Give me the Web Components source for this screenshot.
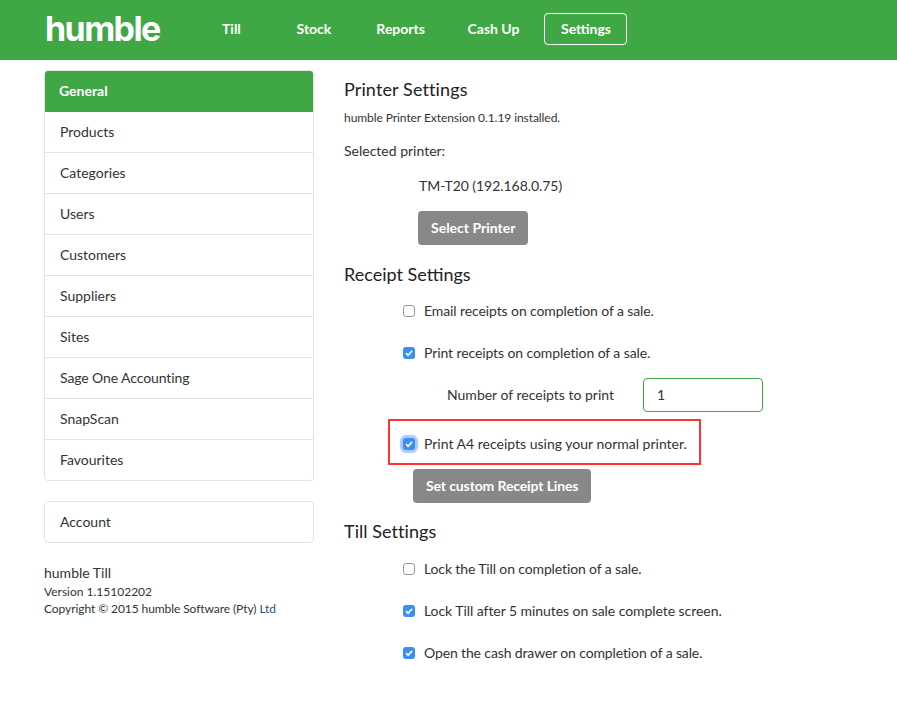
<!DOCTYPE html>
<html>
<head>
<meta charset="utf-8">
<title>humble Till</title>
<style>
  html, body { margin: 0; padding: 0; background: #fff; }
  body { font-family: Lato, "Liberation Sans", sans-serif; font-size: 14px; color: #333; }
</style>
</head>
<body>
<humble-app></humble-app>
<script>
class HumbleHeader extends HTMLElement {
  connectedCallback() {
    this.attachShadow({ mode: 'open' });
    this.shadowRoot.innerHTML = `
      <style>
        :host { display: flex; align-items: center; box-sizing: border-box; height: 60px; background: #3fa845; padding: 0 0 2px 45px; color: #fff; }
        .logo { font-family: Inter, Roboto, sans-serif; font-size: 34px; font-weight: 700; letter-spacing: -1.6px; width: 161px; line-height: 58px; flex: none; }
        nav { display: flex; align-items: center; }
        a { display: block; box-sizing: border-box; height: 32px; line-height: 30px; padding: 0 15px; border: 1px solid transparent; border-radius: 4px; font-size: 14px; font-weight: 700; color: #fff; }
        a:nth-child(1) { margin-right: 23.7px; }
        a:nth-child(2) { margin-right: 13px; }
        a:nth-child(3) { margin-right: 10.6px; }
        a:nth-child(4) { margin-right: 9px; }
        a.on { border-color: #fff; padding: 0 15.5px; }
      </style>
      <div class="logo">humble</div>
      <nav>
        <a>Till</a><a>Stock</a><a>Reports</a><a>Cash Up</a><a class="on">Settings</a>
      </nav>`;
  }
}
customElements.define('humble-header', HumbleHeader);

class HumbleSide extends HTMLElement {
  connectedCallback() {
    const items = ['Products','Categories','Users','Customers','Suppliers','Sites','<span style="letter-spacing:-.1px">Sage One Accounting</span>','SnapScan','Favourites'];
    this.attachShadow({ mode: 'open' });
    this.shadowRoot.innerHTML = `
      <style>
        :host { display: block; width: 270px; flex: none; margin-top: 10px; color: #333; font-size: 14px; }
        .list { border: 1px solid #e3e3e3; border-radius: 4px; overflow: hidden; margin-bottom: 20px; }
        .list div { box-sizing: border-box; height: 41px; line-height: 40px; padding-left: 15px; border-bottom: 1px solid #e3e3e3; }
        .list div:last-child { border-bottom: 0; height: 40px; }
        .list div.active { background: #3fa845; color: #fff; font-weight: 700; height: 42px; margin: -1px -1px 0; padding-left: 15px; line-height: 42px; border: 0; }
        .foot { margin-top: 20px; line-height: 17px; font-size: 12px; }
        .foot .name { font-size: 14px; line-height: 20px; }
        .foot .copy { letter-spacing: -.08px; }
        .foot span { color: #23527c; }
      </style>
      <div class="list">
        <div class="active">General</div>
        ${items.map(i => `<div>${i}</div>`).join('')}
      </div>
      <div class="list"><div style="height:40px;border:0">Account</div></div>
      <div class="foot">
        <div class="name">humble Till</div>
        <div>Version 1.15102202</div>
        <div class="copy">Copyright © 2015 humble Software (Pty) <span>Ltd</span></div>
      </div>`;
  }
}
customElements.define('humble-side', HumbleSide);

class HumbleCheck extends HTMLElement {
  connectedCallback() {
    const on = this.hasAttribute('checked');
    const focus = this.hasAttribute('focus');
    this.attachShadow({ mode: 'open' });
    this.shadowRoot.innerHTML = `
      <style>
        :host { display: flex; align-items: center; height: 42px; padding-left: 59px; font-size: 14px; color: #333; letter-spacing: var(--track, -.1px); }
        .box { box-sizing: border-box; width: 12px; height: 12px; border-radius: 3px; margin: 2px 9px 0 0; flex: none; display: flex; border: 1px solid #999; background: #fff; }
        .box.on { border: 0; background: #3b8ef5; }
        .box.focus { box-shadow: 0 0 1px 3px rgba(59,142,245,.45); }
        svg { width: 12px; height: 12px; }
      </style>
      <span class="box ${on ? 'on' : ''} ${focus ? 'focus' : ''}">
        ${on ? '<svg viewBox="0 0 12 12"><path d="M3 6.2 5.1 8.3 9 3.9" fill="none" stroke="#fff" stroke-width="1.7"/></svg>' : ''}
      </span>
      <slot></slot>`;
  }
}
customElements.define('humble-check', HumbleCheck);

class HumbleButton extends HTMLElement {
  connectedCallback() {
    this.attachShadow({ mode: 'open' });
    this.shadowRoot.innerHTML = `
      <style>
        :host { display: inline-block; box-sizing: border-box; height: 34px; line-height: 34px; padding: 0 13px; background: #888; color: #fff; border-radius: 4px; font-size: 14px; font-weight: 700; letter-spacing: var(--track, 0); }
      </style>
      <slot></slot>`;
  }
}
customElements.define('humble-button', HumbleButton);

class HumbleMain extends HTMLElement {
  connectedCallback() {
    this.attachShadow({ mode: 'open' });
    this.shadowRoot.innerHTML = `
      <style>
        :host { display: block; flex: 1; margin-left: 30px; color: #333; font-size: 14px; }
        h3 { margin: 0; font-size: 18px; font-weight: 400; line-height: 24px; color: #222; }
        .p1 { padding-top: 17px; letter-spacing: .12px; }
        .ext { font-size: 12px; line-height: 17px; margin-top: 8px; letter-spacing: -.07px; }
        .sel { margin-top: 15px; line-height: 20px; }
        .printer { margin: 15px 0 0 75px; line-height: 20px; letter-spacing: -.05px; }
        .btn1 { margin: 15px 0 0 74px; }
        .h2 { margin-top: 17px; }
        .rows { margin-top: 3px; }
        .num { display: flex; align-items: center; height: 42px; padding-left: 103px; }
        .num input { box-sizing: border-box; width: 120px; height: 34px; margin: 1px 0 0 29px; border: 1px solid #3fa845; border-radius: 4px; padding: 0 13px; font: 14px Lato, sans-serif; color: #333; outline: 0; background: #fff; }
        .hl { box-sizing: border-box; width: 313px; height: 46px; margin: 4px 0 0 44px; border: 2px solid #f33; display: flex; }
        .hl humble-check { padding-left: 13px; padding-top: 3px; height: 38px; --track: 0; }
        .btn2 { margin: 4px 0 0 69px; --track: -.12px; }
        .h3 { margin-top: 16px; letter-spacing: .05px; }
        .till { margin-top: 4px; }
      </style>
      <div class="p1"><h3>Printer Settings</h3></div>
      <div class="ext">humble Printer Extension 0.1.19 installed.</div>
      <div class="sel">Selected printer:</div>
      <div class="printer">TM-T20 (192.168.0.75)</div>
      <div class="btn1"><humble-button>Select Printer</humble-button></div>
      <h3 class="h2">Receipt Settings</h3>
      <div class="rows">
        <humble-check>Email receipts on completion of a sale.</humble-check>
        <humble-check checked>Print receipts on completion of a sale.</humble-check>
        <div class="num">Number of receipts to print<input value="1"></div>
      </div>
      <div class="hl"><humble-check checked focus>Print A4 receipts using your normal printer.</humble-check></div>
      <div class="btn2"><humble-button>Set custom Receipt Lines</humble-button></div>
      <h3 class="h3">Till Settings</h3>
      <div class="rows till">
        <humble-check style="--track:-.13px">Lock the Till on completion of a sale.</humble-check>
        <humble-check style="--track:-.06px" checked>Lock Till after 5 minutes on sale complete screen.</humble-check>
        <humble-check style="--track:-.13px" checked>Open the cash drawer on completion of a sale.</humble-check>
      </div>`;
  }
}
customElements.define('humble-main', HumbleMain);

class HumbleApp extends HTMLElement {
  connectedCallback() {
    this.attachShadow({ mode: 'open' });
    this.shadowRoot.innerHTML = `
      <style>
        :host { display: block; }
        .wrap { display: flex; padding-left: 44px; }
      </style>
      <humble-header></humble-header>
      <div class="wrap">
        <humble-side></humble-side>
        <humble-main></humble-main>
      </div>`;
  }
}
customElements.define('humble-app', HumbleApp);
</script>
</body>
</html>
